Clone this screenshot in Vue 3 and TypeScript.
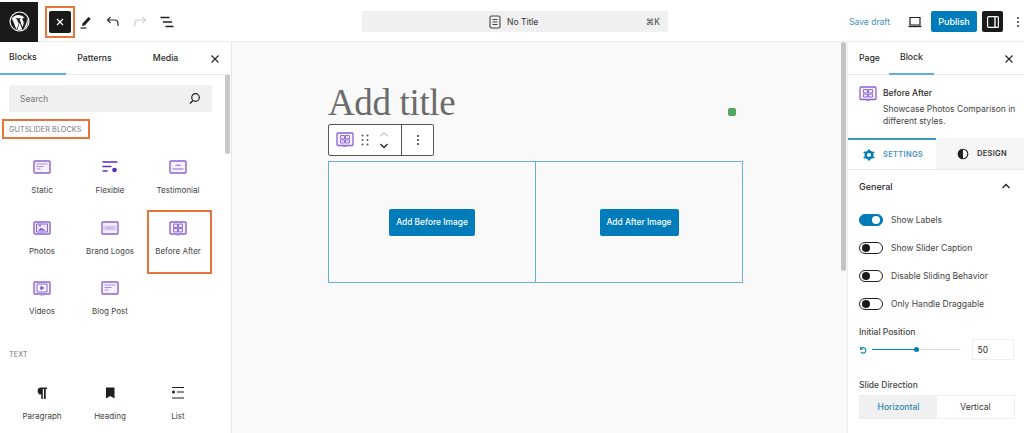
<script setup lang="ts">
interface Blk { name: string; icon: string; boxed?: boolean }
const gut: Blk[] = [
  { name: 'Static', icon: 'static' },
  { name: 'Flexible', icon: 'flex' },
  { name: 'Testimonial', icon: 'testi' },
  { name: 'Photos', icon: 'photo' },
  { name: 'Brand Logos', icon: 'logos' },
  { name: 'Before After', icon: 'ba', boxed: true },
  { name: 'Videos', icon: 'video' },
  { name: 'Blog Post', icon: 'static' },
]
const toggles = [
  { label: 'Show Labels', on: true },
  { label: 'Show Slider Caption', on: false },
  { label: 'Disable Sliding Behavior', on: false },
  { label: 'Only Handle Draggable', on: false },
]
</script>

<template>
  <div class="page">
    <header class="top">
      <div class="wp">
        <svg width="21" height="21" viewBox="0 0 24 24"><circle cx="12" cy="12" r="10.800" fill="none" stroke="#fff" stroke-width="1.300"/><path d="M3.300 8.400 8.500 21l2.700-6.600L9 9.300 7.700 9.100V8.400h5.800v.7l-1.400.2 3.300 9.300 1.100-3.500c.5-1.600.3-2.500-.3-3.600-.5-.9-.9-1.500-.9-2.200 0-.9.6-1.500 1.600-1.600.6 0 1.100.1 1.100.1A9.400 9.400 0 0 0 3.300 8.400ZM12.200 13.300l-2.800 8a9.400 9.400 0 0 0 5.800-.1ZM20 7.500c.9 2.800.5 5.200-.7 7.600l-2.800 5.700A9.400 9.400 0 0 0 20 7.500Z" fill="#fff"/></svg>
      </div>
      <div class="tools">
        <span class="hl"><button class="closeb">
          <svg width="10" height="10" viewBox="0 0 10 10"><path d="M2 2l6 6M8 2l-6 6" stroke="#fff" stroke-width="1.200"/></svg>
        </button></span>
        <svg class="t1" width="16" height="16" viewBox="0 0 16 16"><path d="M4.500 9.500 10.500 3l2.300 1.800L7 11.300l-3 .7Z" fill="#1e1e1e"/><path d="M2.500 14h6" stroke="#1e1e1e" stroke-width="1.200"/></svg>
        <svg class="t2" width="16" height="16" viewBox="0 0 16 16"><path d="M5.500 3 2.500 6l3 3M3 6h6.500a3.500 3.500 0 0 1 3.500 3.500V12" fill="none" stroke="#333" stroke-width="1.200"/></svg>
        <svg class="t2" width="16" height="16" viewBox="0 0 16 16"><path d="M10.500 3l3 3-3 3M13 6H6.500A3.500 3.500 0 0 0 3 9.500V12" fill="none" stroke="#ccd0d4" stroke-width="1.200"/></svg>
        <svg class="t2" width="16" height="16" viewBox="0 0 16 16"><path d="M1.500 3.500h9M4 8h9M6.500 12.500h8" fill="none" stroke="#1e1e1e" stroke-width="1.300"/></svg>
      </div>
      <div class="center">
        <div class="cmd">
          <span class="doc">
            <svg width="12" height="14" viewBox="0 0 12 14"><rect x="1" y="1" width="10" height="12" rx="1.500" fill="none" stroke="#444" stroke-width="1.100"/><path d="M3.500 4.500h5M3.500 7h5M3.500 9.500h5" stroke="#444" stroke-width="1"/></svg>
            No Title
          </span>
          <span class="kbd">⌘K</span>
        </div>
      </div>
      <div class="actions">
        <span class="save">Save draft</span>
        <svg class="lap" width="16" height="14" viewBox="0 0 16 14"><path d="M3 2.500h10v7.500H3Z" fill="none" stroke="#1e1e1e" stroke-width="1.200"/><path d="M1.500 11.500h13" stroke="#1e1e1e" stroke-width="1.300"/></svg>
        <button class="pub">Publish</button>
        <button class="side"><svg width="14" height="14" viewBox="0 0 14 14"><rect x="1.600" y="1.600" width="10.800" height="10.800" rx="1" fill="none" stroke="#fff" stroke-width="1.200"/><path d="M9 1.600v10.800" stroke="#fff" stroke-width="1.400"/></svg></button>
        <span class="kebab topk"><i></i><i></i><i></i></span>
      </div>
    </header>

    <div class="body">
      <aside class="left">
        <div class="tabs">
          <span class="tab active">Blocks</span>
          <span class="tab">Patterns</span>
          <span class="tab">Media</span>
          <svg class="tabx" width="10" height="10" viewBox="0 0 10 10"><path d="M1.500 1.500l7 7M8.500 1.500l-7 7" stroke="#222" stroke-width="1.100"/></svg>
        </div>
        <div class="lscroll">
          <div class="linner">
            <div class="search">
              <span>Search</span>
              <svg width="13" height="13" viewBox="0 0 13 13"><circle cx="7.500" cy="5.500" r="3.800" fill="none" stroke="#222" stroke-width="1.200"/><path d="M5 8.500 1.800 11.500" stroke="#222" stroke-width="1.300"/></svg>
            </div>
            <div class="cat boxed">GUTSLIDER BLOCKS</div>
            <div class="grid gutgrid">
              <div v-for="b in gut" :key="b.name" class="item" :class="{ box: b.boxed }">
                <svg class="bi" width="18" height="18" viewBox="0 0 18 18">
                  <template v-if="b.icon === 'flex'">
                    <path d="M1.500 4h15M1.500 8.500h9M1.500 13h5" stroke="#5b2fb5" stroke-width="1.500"/>
                    <circle cx="13.500" cy="12" r="2.300" fill="#5b2fb5"/>
                  </template>
                  <template v-else>
                    <rect x="1" y="3" width="16" height="12" rx="1" fill="#f6f2fd" stroke="#8a63d2" stroke-width="1.400"/>
                    <path v-if="b.icon === 'static'" d="M3.500 6h11M3.500 8.500h7M3.500 11h4" stroke="#a98ae0" stroke-width="1.200"/>
                    <path v-if="b.icon === 'testi'" d="M6.500 8l1-1.300 1.500 1 1.500-1 1 1.300M3.500 11h11" fill="none" stroke="#8a63d2" stroke-width="1"/>
                    <path v-if="b.icon === 'photo'" d="M3.500 5h11v8h-11Z" fill="#ece4fa" stroke="#8a63d2" stroke-width="1"/>
                    <path v-if="b.icon === 'photo'" d="M6 6.500a1 1 0 1 1 2 0 1 1 0 1 1-2 0M5 11.500l2.500-2.500 4 1.500 1 1Z" fill="#7b52cb"/>
                    <path v-if="b.icon === 'logos'" d="M1.700 6.500h14.600v5H1.700Z" fill="#d9cdf0"/>
                    <path v-if="b.icon === 'logos'" d="M5 9h8" stroke="#a98ae0" stroke-width="1" stroke-dasharray="1 .6"/>
                    <path v-if="b.icon === 'ba'" d="M4.500 5h4v3.500h-4ZM9.500 5h4v3.500h-4ZM4.500 9.500h4V13h-4ZM9.500 9.500h4V13h-4Z" fill="#ece4fa" stroke="#8a63d2" stroke-width=".9"/>
                    <path v-if="b.icon === 'ba' || b.icon === 'video'" d="M7 15h4v1.500H7Z" fill="#a98ae0"/>
                    <path v-if="b.icon === 'video'" d="M4 5h10v8H4Z" fill="none" stroke="#8a63d2" stroke-width="1"/>
                    <path v-if="b.icon === 'video'" d="M7.500 6.800v4.400l3.700-2.200Z" fill="#6d3fc4"/>
                  </template>
                </svg>
                <span class="lbl">{{ b.name }}</span>
              </div>
            </div>
            <div class="cat text">TEXT</div>
            <div class="grid">
              <div class="item">
                <svg class="bi" width="18" height="18" viewBox="0 0 18 18"><path d="M8 3.500h6v1.500h-1.300v10H11V5H9.800v10H8.300V10.500A3.500 3.500 0 0 1 8 3.500Z" fill="#1e1e1e"/></svg>
                <span class="lbl">Paragraph</span>
              </div>
              <div class="item">
                <svg class="bi" width="18" height="18" viewBox="0 0 18 18"><path d="M5 3.500h8.500v11L9.200 12 5 14.500Z" fill="#1e1e1e"/></svg>
                <span class="lbl">Heading</span>
              </div>
              <div class="item">
                <svg class="bi" width="18" height="18" viewBox="0 0 18 18"><path d="M3 3.500h12M8 8h7M3 14h12" stroke="#1e1e1e" stroke-width="1.200"/><circle cx="4.500" cy="8" r="1.500" fill="#1e1e1e"/></svg>
                <span class="lbl">List</span>
              </div>
            </div>
          </div>
          <div class="sb"><i></i></div>
        </div>
      </aside>

      <main class="canvas">
        <div class="doc-col">
          <h1 class="title">Add title</h1>
          <div class="blockbar">
            <div class="bb-a">
              <svg width="18" height="18" viewBox="0 0 18 18"><rect x="1" y="2" width="16" height="12.500" rx="1" fill="#f6f2fd" stroke="#8a63d2" stroke-width="1.300"/><path d="M4.500 4.500h4V8h-4ZM9.500 4.500h4V8h-4ZM4.500 9h4v3h-4ZM9.500 9h4v3h-4Z" fill="#ece4fa" stroke="#8a63d2" stroke-width=".9"/><path d="M7 14.500h4V16H7Z" fill="#a98ae0"/></svg>
              <svg width="8" height="12" viewBox="0 0 8 12"><g fill="#555"><circle cx="1.500" cy="1.500" r="1"/><circle cx="6.500" cy="1.500" r="1"/><circle cx="1.500" cy="6" r="1"/><circle cx="6.500" cy="6" r="1"/><circle cx="1.500" cy="10.500" r="1"/><circle cx="6.500" cy="10.500" r="1"/></g></svg>
              <span class="movers">
                <svg width="10" height="6" viewBox="0 0 10 6"><path d="M1.500 5 5 1.500 8.500 5" fill="none" stroke="#c8c8c8" stroke-width="1.200"/></svg>
                <svg width="10" height="6" viewBox="0 0 10 6"><path d="M1.500 1 5 4.500 8.500 1" fill="none" stroke="#222" stroke-width="1.300"/></svg>
              </span>
            </div>
            <div class="bb-b"><span class="kebab"><i></i><i></i><i></i></span></div>
          </div>
          <div class="ba-block">
            <div class="ba-cell"><button class="blue">Add Before Image</button></div>
            <div class="ba-cell"><button class="blue">Add After Image</button></div>
          </div>
        </div>
        <span class="dot"></span>
        <div class="csb"><i></i></div>
      </main>

      <aside class="right">
        <div class="tabs rtabs">
          <span class="rtab">Page</span>
          <span class="rtab active">Block</span>
          <svg class="tabx" width="10" height="10" viewBox="0 0 10 10"><path d="M1.500 1.500l7 7M8.500 1.500l-7 7" stroke="#222" stroke-width="1.100"/></svg>
        </div>
        <div class="card">
          <svg width="18" height="18" viewBox="0 0 18 18"><rect x="1" y="2" width="16" height="12.500" rx="1" fill="#f6f2fd" stroke="#8a63d2" stroke-width="1.300"/><path d="M4.500 4.500h4V8h-4ZM9.500 4.500h4V8h-4ZM4.500 9h4v3h-4ZM9.500 9h4v3h-4Z" fill="#ece4fa" stroke="#8a63d2" stroke-width=".9"/><path d="M7 14.500h4V16H7Z" fill="#a98ae0"/></svg>
          <div>
            <div class="card-t">Before After</div>
            <div class="card-d">Showcase Photos Comparison in different styles.</div>
          </div>
        </div>
        <div class="subtabs">
          <div class="st on">
            <svg width="12" height="12" viewBox="0 0 12 12"><circle cx="6" cy="6" r="3.300" fill="none" stroke="#007cba" stroke-width="2.400"/><path d="M6 .5v2M6 9.500v2M.8 3l1.800 1M9.400 8l1.800 1M.8 9l1.800-1M9.400 4l1.800-1" stroke="#007cba" stroke-width="2"/></svg>
            SETTINGS
          </div>
          <div class="st">
            <svg width="12" height="12" viewBox="0 0 12 12"><circle cx="6" cy="6" r="4.800" fill="none" stroke="#1e1e1e" stroke-width="1.100"/><path d="M6 1a5 5 0 0 0 0 10Z" fill="#1e1e1e"/></svg>
            DESIGN
          </div>
        </div>
        <div class="panel">
          <div class="panel-h">
            <span>General</span>
            <svg width="10" height="6" viewBox="0 0 10 6"><path d="M1.500 5 5 1.500 8.500 5" fill="none" stroke="#222" stroke-width="1.300"/></svg>
          </div>
          <div class="toggles">
            <div v-for="t in toggles" :key="t.label" class="tg">
              <span class="sw" :class="{ on: t.on }"><i></i></span>
              <span>{{ t.label }}</span>
            </div>
          </div>
          <div class="field-l">Initial Position</div>
          <div class="range">
            <svg width="8" height="8" viewBox="0 0 8 8"><path d="M1.500 1v2.200h2.200M1.700 3A2.800 2.800 0 1 1 2 6.200" fill="none" stroke="#007cba" stroke-width="1.100"/></svg>
            <div class="track"><span class="fill"></span><span class="thumb"></span></div>
            <div class="num">50</div>
          </div>
          <div class="field-l dir">Slide Direction</div>
          <div class="seg">
            <span class="sel">Horizontal</span>
            <span>Vertical</span>
          </div>
        </div>
      </aside>
    </div>
  </div>
</template>

<style>
html, body { margin: 0; padding: 0; background: #fff; }
</style>

<style scoped>
* { box-sizing: border-box; }
.page { width: 1024px; height: 433px; overflow: hidden; font-family: Inter, "Liberation Sans", sans-serif; color: #2a2a2a; font-size: 9px; display: flex; flex-direction: column; padding-top: 2px; }
.top { height: 40px; flex: none; display: flex; align-items: center; border-bottom: 1px solid #ececec; }
.wp { width: 38px; height: 40px; background: #1a1a1a; display: flex; align-items: center; justify-content: center; flex: none; }
.tools { width: 184px; display: flex; align-items: center; padding-left: 7px; flex: none; }
.hl { width: 30px; height: 32px; border: 2px solid #e8743b; display: flex; align-items: center; justify-content: center; flex: none; }
.closeb { width: 22px; height: 22px; background: #1a1a1a; border: 0; border-radius: 2px; padding: 0; display: flex; align-items: center; justify-content: center; }
.t1 { margin-left: 3px; }
.t2 { margin-left: 11px; }
.center { width: 306px; margin-left: 140px; flex: none; }
.cmd { width: 306px; height: 21px; background: #f0f0f0; border-radius: 2px; display: flex; align-items: center; justify-content: flex-end; position: relative; padding-right: 8px; }
.doc { position: absolute; left: 127px; display: flex; align-items: center; gap: 6px; font-size: 8.500px; color: #333; }
.kbd { font-size: 8.500px; color: #444; }
.actions { flex: 1; display: flex; align-items: center; justify-content: flex-end; }
.save { color: #3f93c0; font-size: 8.500px; margin-right: 17px; }
.lap { margin-right: 8px; }
.pub { width: 46px; height: 21px; background: #007cba; color: #fff; border: 0; border-radius: 2px; font: 500 9px Inter, sans-serif; padding: 0; margin-right: 5px; }
.side { width: 21px; height: 21px; background: #1a1a1a; border: 0; border-radius: 2px; padding: 0; display: flex; align-items: center; justify-content: center; margin-right: 13px; }
.kebab { display: flex; flex-direction: column; gap: 2px; align-items: center; width: 4px; }
.topk { margin-right: 4px; }
.kebab i { width: 2px; height: 2px; border-radius: 50%; background: #333; }
.body { flex: 1; display: flex; min-height: 0; }
.left { width: 232px; flex: none; display: flex; flex-direction: column; border-right: 1px solid #e6e6e6; }
.tabs { height: 33px; flex: none; display: flex; align-items: center; position: relative; border-bottom: 1px solid #e8e8e8; }
.tab { height: 33px; display: flex; align-items: center; justify-content: center; font-weight: 500; font-size: 8.700px; }
.tab:nth-child(1) { width: 66px; justify-content: flex-start; padding-left: 9px; }
.tab:nth-child(2) { width: 57px; }
.tab:nth-child(3) { width: 85px; }
.tab.active { border-bottom: 2px solid #5fb0d6; }
.tabx { position: absolute; right: 11px; top: 12px; }
.left .tabs { width: 231px; }
.lscroll { flex: 1; display: flex; min-height: 0; overflow: hidden; }
.linner { width: 222px; flex: none; padding-top: 10px; }
.search { margin-left: 9px; width: 203px; height: 27px; background: #f0f0f0; display: flex; align-items: center; justify-content: space-between; padding: 0 11px; color: #777; font-size: 8.500px; }
.cat { font-size: 7.200px; color: #777; letter-spacing: .1px; }
.cat.boxed { width: 88px; height: 20px; margin: 7px 0 0 2px; border: 2px solid #e8743b; display: flex; align-items: center; padding-left: 5px; }
.cat.text { margin: 14.500px 0 0 9px; height: 12px; line-height: 12px; }
.grid { display: grid; grid-template-columns: repeat(3, 68px); margin-left: 8px; margin-top: 18px; width: 204px; }
.gutgrid { margin-top: 14px; grid-auto-rows: 60.500px; }
.item { height: 60.500px; display: flex; flex-direction: column; align-items: center; padding-top: 5px; font-size: 8px; color: #444; }
.item.box { border: 2px solid #e8743b; margin: -3.500px 0 0 3px; height: 64px; width: 65px; padding: 6.500px 3px 0 0; }
.bi { flex: none; }
.lbl { margin-top: 9px; white-space: nowrap; }
.sb { width: 9px; flex: none; position: relative; }
.sb i { position: absolute; left: 3px; top: -24px; width: 5px; height: 103px; background: #c8c8c8; border-radius: 3px; }
.canvas { width: 616px; flex: none; background: #f9f9f9; position: relative; padding-left: 96px; border-right: 1px solid #ececec; }
.doc-col { width: 416px; }
.title { margin: 0; padding-top: 42px; font: 400 37px/37px "Liberation Serif", serif; color: #6a6a6a; height: 82px; letter-spacing: -.35px; }
.blockbar { width: 106px; height: 32px; background: #fff; border: 1px solid #555; border-radius: 2px; display: flex; }
.bb-a { width: 73px; border-right: 1px solid #555; display: flex; align-items: center; padding-left: 7px; gap: 7px; }
.bb-b { flex: 1; display: flex; align-items: center; justify-content: center; }
.movers { display: flex; flex-direction: column; gap: 6px; margin-left: 3px; }
.ba-block { margin-top: 5px; height: 122px; width: 415px; border: 1px solid #6aafd0; display: flex; }
.ba-cell { flex: 1; display: flex; align-items: center; justify-content: center; }
.ba-cell + .ba-cell { border-left: 1px solid #6aafd0; }
.blue { height: 27px; padding: 0 7px; border: 0; border-radius: 2px; background: #007cba; color: #fff; font: 500 8.400px Inter, sans-serif; }
.dot { position: absolute; left: 496px; top: 66px; width: 8px; height: 8px; border-radius: 2px; background: #55a465; }
.csb { position: absolute; right: 0; top: 0; bottom: 0; width: 8px; }
.csb i { position: absolute; left: 2px; top: 0; width: 5px; height: 229px; background: #c4c4c4; border-radius: 3px; }
.right { flex: 1; display: flex; flex-direction: column; min-width: 0; }
.rtabs { padding-left: 11px; }
.rtabs .tabx { right: 10px; }
.rtab { height: 33px; display: flex; align-items: center; font-weight: 500; font-size: 8.700px; }
.rtab:first-child { margin-right: 9px; }
.rtab.active { width: 45px; justify-content: center; border-bottom: 2px solid #5fb0d6; }
.card { height: 63px; display: flex; gap: 6px; padding: 10px 10px 0 11px; flex: none; }
.card svg { flex: none; }
.card-t { font-size: 8.500px; font-weight: 500; margin-top: 3px; margin-bottom: 5px; }
.card-d { font-size: 8.500px; line-height: 12px; color: #444; width: 140px; }
.subtabs { height: 32px; flex: none; display: flex; background: #f6f6f6; border-bottom: 1px solid #eaeaea; }
.st { width: 88px; display: flex; align-items: center; gap: 8px; font-size: 7.500px; font-weight: 600; letter-spacing: .3px; color: #333; padding-left: 21px; }
.st.on { background: #fff; color: #3f93c0; border-top: 2px solid #3f93c0; padding-left: 15px; }
.panel { padding: 0 10px 0 11px; }
.panel-h { height: 32px; display: flex; align-items: center; justify-content: space-between; font-size: 9px; font-weight: 500; padding-right: 3px; }
.toggles { display: flex; flex-direction: column; gap: 16px; margin-top: 11.500px; }
.tg { height: 12px; display: flex; align-items: center; gap: 8px; font-size: 8.500px; color: #444; }
.sw { width: 24px; height: 12px; border: 1px solid #222; border-radius: 6px; position: relative; flex: none; background: #fff; }
.sw i { position: absolute; left: 2px; top: 1px; width: 8px; height: 8px; background: #1a1a1a; border-radius: 50%; }
.sw.on { background: #007cba; border-color: #007cba; }
.sw.on i { left: auto; right: 2px; background: #fff; }
.field-l { font-size: 8.500px; color: #444; font-weight: 500; margin-top: 17.500px; }
.range { display: flex; align-items: center; height: 21px; margin-top: 2px; }
.track { width: 90px; height: 1px; background: #ddd; margin-left: 5px; position: relative; }
.fill { position: absolute; left: 0; top: 0; height: 1px; width: 44px; background: #007cba; }
.thumb { position: absolute; left: 42px; top: -2px; width: 5px; height: 5px; border-radius: 50%; background: #007cba; }
.num { width: 43px; height: 21px; margin-left: 11px; border: 1px solid #eee; display: flex; align-items: center; padding-left: 5px; font-size: 8.500px; }
.field-l.dir { margin-top: 20px; }
.seg { display: flex; width: 156px; height: 24px; margin-top: 5px; border: 1px solid #eee; font-size: 8.500px; }
.seg span { flex: 1; display: flex; align-items: center; justify-content: center; color: #333; }
.seg .sel { background: #f0f0f0; color: #2f86b5; font-weight: 500; }
</style>
